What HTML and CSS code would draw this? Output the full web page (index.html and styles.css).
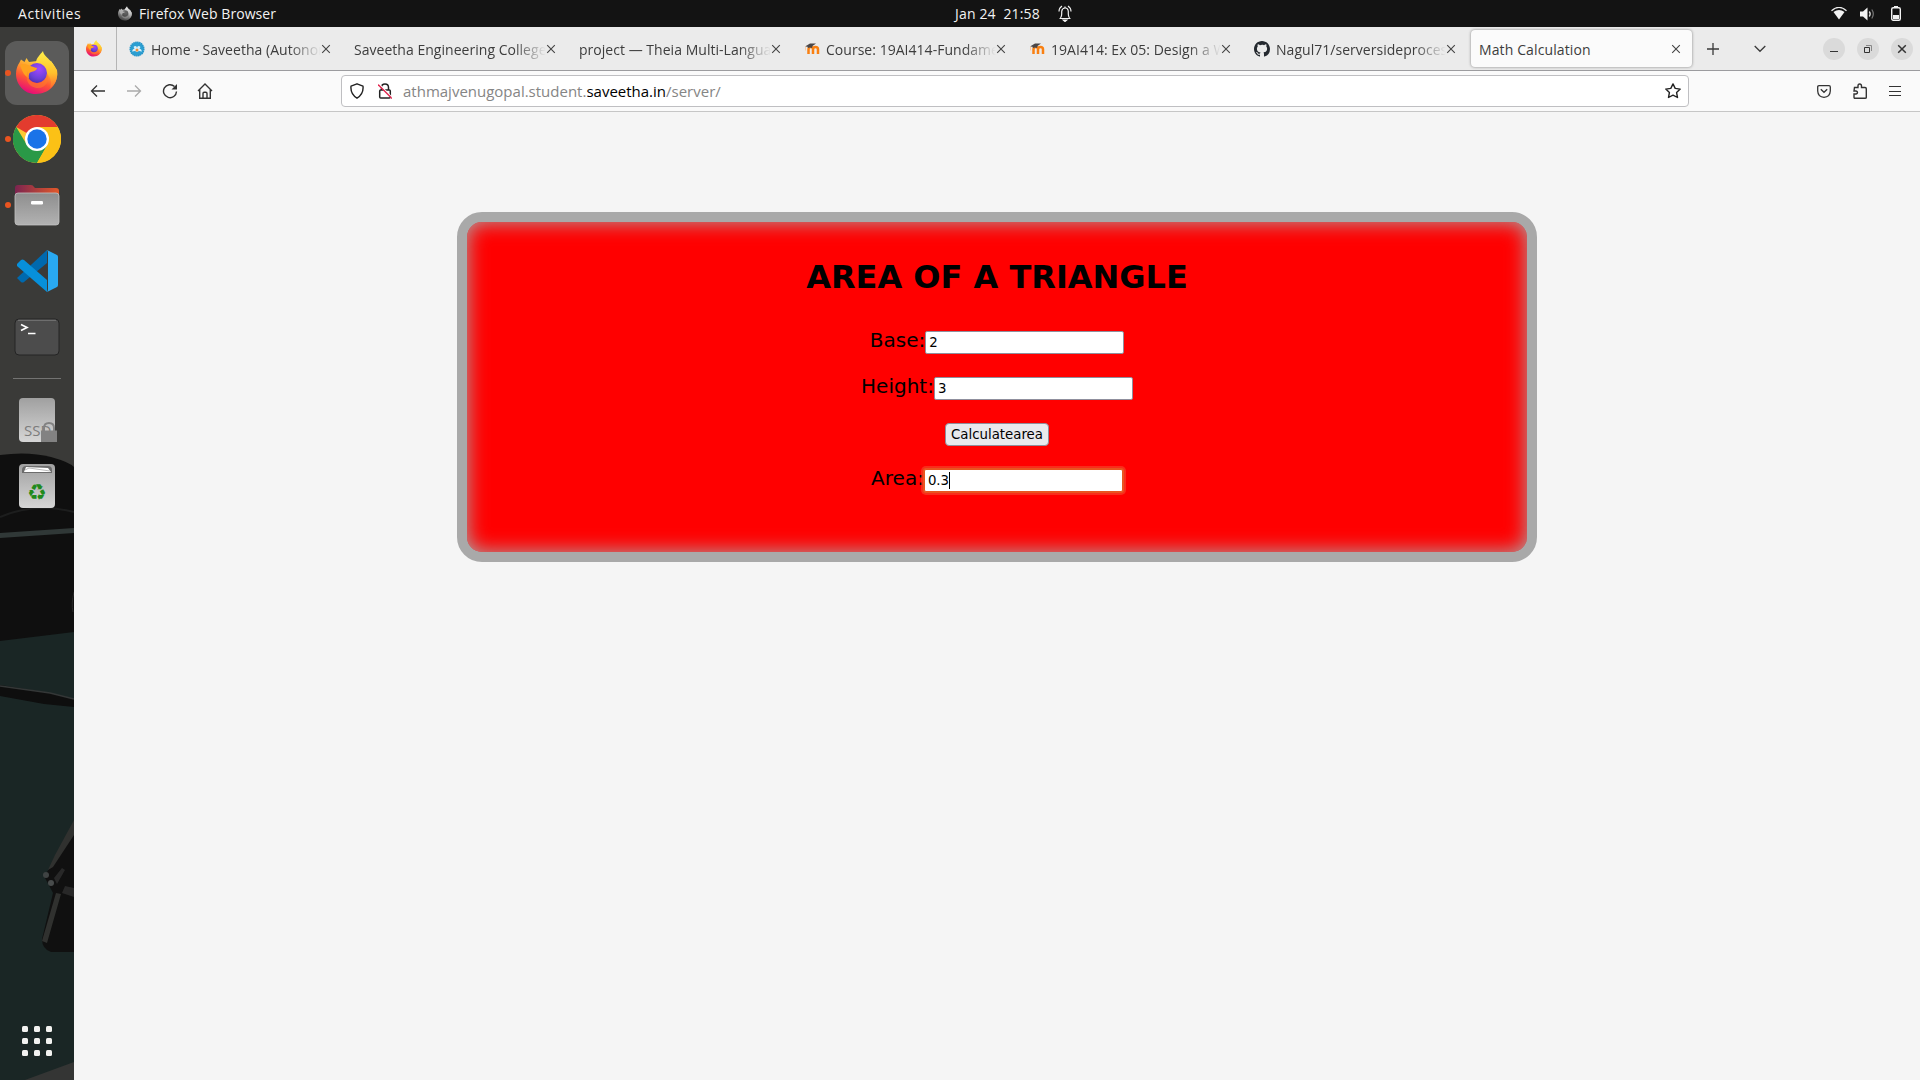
FILE: index.html
```html
<!DOCTYPE html>
<html lang="en">
<head>
<meta charset="utf-8">
<title>Math Calculation</title>
<link rel="stylesheet" href="styles.css">
</head>
<body>
<svg class="defs" width="0" height="0" aria-hidden="true">
  <defs>
    <linearGradient id="flame" x1=".8" y1="0" x2=".35" y2="1"><stop offset="0" stop-color="#fff44f"/><stop offset=".35" stop-color="#ffa930"/><stop offset=".65" stop-color="#ff5634"/><stop offset="1" stop-color="#e5097c"/></linearGradient>
    <linearGradient id="tail" x1=".5" y1="0" x2=".5" y2="1"><stop offset="0" stop-color="#fff04a"/><stop offset=".6" stop-color="#ffc02c"/><stop offset="1" stop-color="#ff6b2f"/></linearGradient>
    <radialGradient id="globe" cx=".6" cy=".3" r=".8"><stop offset="0" stop-color="#a347ff"/><stop offset=".6" stop-color="#6b41d8"/><stop offset="1" stop-color="#4a2aa8"/></radialGradient>
    <linearGradient id="folder" x1="0" y1="0" x2="1" y2="0"><stop offset="0" stop-color="#7b2450"/><stop offset="1" stop-color="#e2592a"/></linearGradient>
    <linearGradient id="metal" x1="0" y1="0" x2="0" y2="1"><stop offset="0" stop-color="#8e8e8e"/><stop offset="1" stop-color="#b2b2b2"/></linearGradient>
    <linearGradient id="drive" x1="0" y1="0" x2="0" y2="1"><stop offset="0" stop-color="#a0a0a0"/><stop offset="1" stop-color="#d6d6d6"/></linearGradient>
    <symbol id="firefox" viewBox="0 0 42 44">
      <path fill="url(#flame)" d="M3.5 11.500 5 8.500 8.500 11l2-4 2.500 4 8-1 8 5 6-5 6 9c2 13-7 24-21 24C9 43.500 0 34 0 23c0-5 1.500-8.500 3.500-11.500z"/>
      <path fill="url(#tail)" d="M27 0c1 7 11 9 14 21 1 6-2 13-7 16 2-6 1-10-4-16L20 12c0-5 4-8 7-12z"/>
      <circle cx="21" cy="22" r="10" fill="url(#globe)"/>
      <path fill="#ffa21f" d="M4 14c5-3 9 1 17 3 0 3-5 3.500-7 4.500-2 2-1 6-1 6C7 24 6 19 4 14z"/>
      <path fill="#ff7a2c" d="M12 20c-2 8 4 13 11 12 5-1 8-6 8-10 3 8-1 15-9 15-9 0-14-9-10-17z" opacity=".6"/>
    </symbol>
    <symbol id="close" viewBox="0 0 10 10"><path d="M1.200 1.200l7.600 7.600M8.800 1.200L1.200 8.800" fill="none" stroke="currentColor" stroke-width="1.100"/></symbol>
    <symbol id="moodle" viewBox="0 0 16 12">
      <path d="M4.500 11V6.500q0-2.500 2.300-2.500T9 6.500V11M9 6.500Q9 4 11.500 4T14 6.500V11" fill="none" stroke="#f98012" stroke-width="2.500"/>
      <path d="M1 3.500 6 .500h6L8.500 3l-.5 2q-2-1-4 0L3.500 3.700z" fill="#4a4748"/><path d="M1.500 3.500v4" stroke="#f7c7a0" stroke-width=".9"/>
    </symbol>
  </defs>
</svg>

<header class="topbar">
  <span class="activities">Activities</span>
  <span class="app"><svg class="grey" width="14" height="15"><use href="#firefox"/></svg><span class="app-name">Firefox Web Browser</span></span>
  <span class="clock"><span class="clock-text">Jan 24&nbsp; 21:58</span>
    <svg width="14" height="17" viewBox="0 0 14 17" fill="none" stroke="#f2f2f2" stroke-width="1.200"><path d="M1.500 13.500h11M2.500 13q1.200-1.500 1.200-4V6.500Q4 3.200 7 3t3.300 3.500V9q0 2.500 1.200 4M1 6.500Q1 3 4 1M13 6.500Q13 3 10 1"/><path d="M7 3V1.500"/><path d="M5.300 15h3.400L7 16.500z" fill="#f2f2f2"/></svg>
  </span>
  <span class="status">
    <svg width="16" height="13" viewBox="0 0 16 13"><path d="M.5 3.800Q8-3 15.500 3.800" fill="none" stroke="#eee" stroke-width="1.300"/><path d="M2.500 5Q8 1.200 13.500 5L8 12.500z" fill="#f2f2f2"/></svg>
    <svg width="15" height="14" viewBox="0 0 15 14"><path d="M0 4.500h3L7.500.500v13L3 9.500H0z" fill="#f2f2f2"/><path d="M9.300 4.500q1.800 2.500 0 5" fill="none" stroke="#ddd" stroke-width="1.300"/><path d="M11.800 2.500q3 4.500 0 9" fill="none" stroke="#777" stroke-width="1.200"/></svg>
    <svg width="10" height="15" viewBox="0 0 10 15"><rect x=".7" y="1.700" width="8.600" height="12.600" rx="1.500" fill="none" stroke="#f2f2f2" stroke-width="1.400"/><path d="M3 0h4v1.500H3zM2 9h6v4H2z" fill="#f2f2f2"/></svg>
  </span>
</header>

<div class="desktop">
  <nav class="dock">
    <svg class="wallpaper" width="74" height="1053" viewBox="0 27 74 1053">
      <path fill="#3a3a38" d="M0 27h74v1053H0z"/>
      <path fill="#0f0f0f" d="M0 455q28-4 51 2 18 5 23 10v175L0 645z"/>
      <path d="M0 517q35-15 74-5" fill="none" stroke="#1d1e1e" stroke-width="2"/>
      <path fill="#303837" d="M0 533l74-5v5L0 538z"/>
      <path fill="#1a2625" d="M0 641l74-9v448H0z"/>
      <path d="M74 592q-3 12-1 20" stroke="#292929" fill="none"/>
      <path fill="#0e0e0e" d="M0 685l50 8 24 6v8l-30-3-44-8z"/>
      <path d="M0 686l50 7 24 6" fill="none" stroke="#343737" stroke-width="1.500"/>
      <path fill="#101010" d="M74 821L54 862l-10 14 9 17-11 46q0 10 9 13h23z"/>
      <path fill="#30312f" d="M74 820L55 855l-7 15 5-3 21-32zM56 893l5 1-14 49-5-2z"/>
      <path fill="#282828" d="M54 878l8-10 3 2-8 14zM62 893l3-7 9 2v9z"/>
      <circle cx="46" cy="875" r="3" fill="#3f4343"/><circle cx="51" cy="883" r="3" fill="#484b4b"/>
      <path fill="#343534" d="M25 1080l49-18v18z"/>
    </svg>
    <div class="slot running active"><svg width="42" height="44"><use href="#firefox"/></svg></div>
    <div class="slot running">
      <svg width="48" height="48" viewBox="0 0 48 48"><circle cx="24" cy="24" r="24" fill="#fcc934"/><path fill="#e33b2e" d="M24 24 3.200 12A24 24 0 0 1 44.800 12z"/><path fill="#2a9947" d="M3.200 12A24 24 0 0 0 24 48l10.400-18L24 24l-10 6z"/><path fill="#fbc116" d="M24 48a24 24 0 0 0 20.800-36H24l10.400 18z"/><circle cx="24" cy="24" r="12" fill="#fff"/><circle cx="24" cy="24" r="9.700" fill="#1a73e8"/></svg>
    </div>
    <div class="slot running">
      <svg width="46" height="42" viewBox="0 0 46 42"><path fill="url(#folder)" d="M1 14V4q0-3 3-3h13q2 0 3 2l1 1h21q3 0 3 3v9z"/><rect x="1" y="9" width="44" height="32" rx="3" fill="url(#metal)" stroke="#c2c2c2" stroke-width=".8"/><rect x="17" y="17" width="12" height="3.500" rx="1.200" fill="#fff"/></svg>
    </div>
    <div class="slot">
      <svg width="42" height="42" viewBox="0 0 42 42"><path fill="#0069ae" d="M1 28l4 4q1.500 1 3 0L31 13V0z"/><path fill="#0790db" d="M1 14l4-4q1.500-1 3 0L31 30v12L1 16z"/><path fill="#29a9f1" d="M31 0l10 5q1 .6 1 2v28q0 1.400-1 2l-10 5q1-1 1-3V3q0-2-1-3z"/></svg>
    </div>
    <div class="slot">
      <svg width="46" height="38" viewBox="0 0 46 38"><rect x="1" y="1" width="44" height="36" rx="4" fill="#4c4c4c" stroke="#242424"/><path d="M4 2.300h38" stroke="#777"/><path d="M7 6.500l6 3-6 3M14 15.500h7.500" fill="none" stroke="#fff" stroke-width="1.700"/></svg>
    </div>
    <div class="divider"></div>
    <div class="slot">
      <svg width="40" height="44" viewBox="0 0 40 44" class="ssd"><rect width="36" height="44" rx="4" fill="url(#drive)"/><text x="5" y="38" class="ssd-label">SSD</text><path d="M25 33v-3q0-5 5-5t5 5v3" fill="none" stroke="#828282" stroke-width="2"/><rect x="22" y="32.500" width="16" height="11.500" fill="#828282"/></svg>
    </div>
    <div class="slot">
      <svg width="36" height="44" viewBox="0 0 36 44"><rect width="36" height="44" rx="4" fill="url(#drive)"/><path fill="#6c6c6c" d="M3 9V6q0-4 4-4h22q4 0 4 4v3z"/><path fill="#fff" d="M5 8l2-5 22 1 3 4z"/><path d="M6 6l4-2 21 3" fill="none" stroke="#bbb"/><text x="18" y="36" text-anchor="middle" class="recycle">♻</text></svg>
    </div>
    <div class="apps"><i></i><i></i><i></i><i></i><i></i><i></i><i></i><i></i><i></i></div>
  </nav>

  <section class="window">
    <div class="tabs">
      <div class="pinned"><svg width="16" height="17"><use href="#firefox"/></svg></div>
      <div class="tab"><svg class="fav" width="16" height="16" viewBox="0 0 16 16"><circle cx="8" cy="8" r="6.800" fill="#2b9fd2" stroke="#2394c9" stroke-width="1.500" stroke-dasharray="1.500 .5"/><path d="M3 10.500q.5-2.500 2.500-3L4.500 6q1.500-1.500 3-.5L8 7l.5-1.500q1.500-1 3 .5l-1 1.500q2 .5 2.500 3l-3-.5-2 1-2-1z" fill="#d9f0fa"/><circle cx="8" cy="9" r="1.500" fill="#ef8e3b"/></svg><span class="label">Home - Saveetha (Autonomous)</span><svg class="x" width="10" height="10"><use href="#close"/></svg></div>
      <div class="tab"><span class="label">Saveetha Engineering College</span><svg class="x" width="10" height="10"><use href="#close"/></svg></div>
      <div class="tab"><span class="label">project — Theia Multi-Language</span><svg class="x" width="10" height="10"><use href="#close"/></svg></div>
      <div class="tab"><svg class="fav" width="16" height="12"><use href="#moodle"/></svg><span class="label">Course: 19AI414-Fundamentals</span><svg class="x" width="10" height="10"><use href="#close"/></svg></div>
      <div class="tab"><svg class="fav" width="16" height="12"><use href="#moodle"/></svg><span class="label">19AI414: Ex 05: Design a Website</span><svg class="x" width="10" height="10"><use href="#close"/></svg></div>
      <div class="tab"><svg class="fav" width="16" height="16" viewBox="0 0 16 16"><path fill="#24292f" fill-rule="evenodd" d="M8 0C3.580 0 0 3.580 0 8c0 3.540 2.290 6.530 5.470 7.590.4.070.55-.17.55-.38 0-.19-.01-.82-.01-1.490-2.010.37-2.530-.49-2.690-.94-.09-.23-.48-.94-.82-1.130-.28-.15-.68-.52-.01-.53.63-.01 1.080.58 1.230.82.72 1.210 1.870.87 2.330.66.070-.52.28-.87.51-1.070-1.780-.2-3.640-.89-3.640-3.950 0-.87.31-1.590.82-2.150-.08-.2-.36-1.020.08-2.120 0 0 .67-.21 2.200.82A7.600 7.600 0 0 1 8 3.860c.68 0 1.360.09 2 .27 1.530-1.040 2.200-.82 2.200-.82.44 1.100.16 1.920.08 2.120.51.56.82 1.270.82 2.150 0 3.070-1.870 3.750-3.650 3.950.29.25.54.73.54 1.480 0 1.070-.01 1.930-.01 2.200 0 .21.15.46.55.38A8.010 8.010 0 0 0 16 8c0-4.420-3.580-8-8-8z"/></svg><span class="label">Nagul71/serversideprocessing</span><svg class="x" width="10" height="10"><use href="#close"/></svg></div>
      <div class="tab current"><span class="label">Math Calculation</span><svg class="x" width="10" height="10"><use href="#close"/></svg></div>
      <svg class="newtab" width="12" height="12" viewBox="0 0 12 12"><path d="M6 0v12M0 6h12" stroke="#3a3a3a" stroke-width="1.300"/></svg>
      <svg class="chevron" width="12" height="8" viewBox="0 0 12 8"><path d="M.7 1l5.300 5.300L11.300 1" fill="none" stroke="#3a3a3a" stroke-width="1.300"/></svg>
      <div class="controls">
        <span class="ctl"><svg width="10" height="10"><path d="M1 7.500h8" stroke="#333"/></svg></span>
        <span class="ctl"><svg width="10" height="10" fill="none"><path d="M3 1.500h5.500V7" stroke="#888"/><path d="M1.500 3.500h5v5h-5z" stroke="#333"/></svg></span>
        <span class="ctl"><svg width="10" height="10"><path d="M1.200 1.200l7.600 7.600M8.800 1.200L1.200 8.800" stroke="#333" stroke-width="1.500"/></svg></span>
      </div>
    </div>

    <div class="toolbar">
      <div class="navbuttons">
        <svg width="16" height="16" viewBox="0 0 16 16"><path d="M15 8H1.500M7 2.500L1.500 8 7 13.500" fill="none" stroke="#333" stroke-width="1.300"/></svg>
        <svg width="16" height="16" viewBox="0 0 16 16"><path d="M1 8h13.500M9 2.500L14.500 8 9 13.500" fill="none" stroke="#aaa" stroke-width="1.300"/></svg>
        <svg width="16" height="16" viewBox="0 0 16 16"><path d="M12.500 3.500A6.500 6.500 0 1 0 14.500 8.500" fill="none" stroke="#333" stroke-width="1.400"/><path d="M15 1v5.500H9.500z" fill="#333"/></svg>
        <svg class="home" width="16" height="16" viewBox="0 0 16 16"><path d="M1 8l7-7 7 7M2.700 6.500v8.800h10.600V6.500M6 15V10.500q0-1.200 1.200-1.200h1.600q1.200 0 1.200 1.200V15" fill="none" stroke="#333" stroke-width="1.400"/></svg>
      </div>
      <div class="urlbar">
        <svg width="14" height="16" viewBox="0 0 14 16"><path d="M7 .8l6 2.400q.8 7.800-6 12Q.2 11 1 3.200z" fill="none" stroke="#222" stroke-width="1.400" stroke-linejoin="round"/></svg>
        <svg class="lock" width="14" height="16" viewBox="0 0 14 16"><rect x="1.700" y="7" width="10.600" height="8" rx="1" fill="none" stroke="#222" stroke-width="1.500"/><path d="M3.500 7V4.500Q3.500 1 7 1t3.500 3.500V7" fill="none" stroke="#222" stroke-width="1.500"/><path d="M1 1l13 13.500" stroke="#fff" stroke-width="1.500"/><path d="M0 1.500l14 14" stroke="#e22850" stroke-width="1.400"/></svg>
        <span class="url">athmajvenugopal.student.<b>saveetha.in</b>/server/</span>
        <svg width="16" height="16" viewBox="0 0 16 16"><path d="M8 .9l2.200 4.500 5 .7-3.600 3.500.9 4.900L8 12.200l-4.500 2.300.9-4.900L.8 6.100l5-.7z" fill="none" stroke="#222" stroke-width="1.400" stroke-linejoin="round"/></svg>
      </div>
      <div class="tools">
        <svg width="14" height="13" viewBox="0 0 14 13" fill="none" stroke="#333" stroke-width="1.300"><path d="M2 .7h10q1.300 0 1.300 1.300v4Q13 12 7 12.300 1 12 .7 6V2Q.7.700 2 .700z"/><path d="M3.800 4.300L7 7.300l3.200-3"/></svg>
        <svg width="14" height="16" viewBox="0 0 14 16"><path d="M1.500 4.500H5V3q0-2 1.700-2t1.800 2v1.500H12q1.300 0 1.300 1.300v8.700q0 .8-1.300.8H2q-1 0-1-1.300V11h2q1.500-.3 1.500-1.500T3 8H1z" fill="none" stroke="#333" stroke-width="1.400"/></svg>
        <svg width="12" height="12"><path d="M0 1.500h12M0 6.500h12M0 10.500h12" stroke="#333"/></svg>
      </div>
    </div>

    <main class="page">
      <div class="card">
        <h1>AREA OF A TRIANGLE</h1>
        <form class="fields">
          <div class="field"><span>Base:</span><span class="input">2</span></div>
          <div class="field"><span>Height:</span><span class="input">3</span></div>
          <div class="field"><button type="button">Calculatearea</button></div>
          <div class="field"><span>Area:</span><span class="input focus">0.3<i class="caret"></i></span></div>
        </form>
      </div>
    </main>
  </section>
</div>
</body>
</html>
```
FILE: styles.css
```css
* { box-sizing: border-box; }
body { margin: 0; width: 1920px; height: 1080px; overflow: hidden; font: 14px "Open Sans", "Noto Sans", sans-serif; display: flex; flex-direction: column; }
svg { display: block; flex: none; }
.defs { position: absolute; }

/* system bar */
.topbar { height: 27px; background: #131313; color: #f2f2f2; display: flex; align-items: center; flex: none; white-space: nowrap; }
.activities { margin-left: 18px; width: 100px; letter-spacing: .55px; }
.app { display: flex; align-items: center; gap: 7px; width: 837px; }
.app-name { letter-spacing: .07px; }
.grey { filter: grayscale(1); }
.clock { display: flex; align-items: center; width: 876px; gap: 18px; }
.clock-text { width: 85px; letter-spacing: .17px; padding-bottom: 1px; }
.status { display: flex; align-items: center; gap: 13px; }
.status svg:last-child { margin-left: 3px; }

/* dock */
.desktop { display: flex; flex: 1; min-height: 0; }
.dock { width: 74px; flex: none; position: relative; padding-top: 13px; display: flex; flex-direction: column; overflow: hidden; }
.wallpaper { position: absolute; left: 0; top: 0; z-index: -1; }
.slot { height: 66px; flex: none; display: flex; align-items: center; justify-content: center; position: relative; }
.active::after { content: ""; position: absolute; inset: 1px 5px; border-radius: 12px; background: #5b5b5a; z-index: -1; }
.running::before { content: ""; position: absolute; left: 5px; top: 30px; width: 6px; height: 6px; border-radius: 50%; background: #e95420; }
.divider { height: 1px; margin: 8px 13px; background: #737372; flex: none; }
.ssd { margin-left: 4px; }
.ssd-label { font: 15px "Open Sans", sans-serif; fill: #7c7c7c; }
.recycle { font: 22px "DejaVu Sans", sans-serif; fill: #218a1c; }
.apps { margin: auto auto 24px; display: grid; grid-template-columns: repeat(3, 6px); gap: 6px; }
.apps i { height: 6px; border-radius: 1.500px; background: #f2f2f0; }

/* tab strip */
.window { flex: 1; display: flex; flex-direction: column; min-width: 0; }
.tabs { height: 44px; flex: none; background: #ebebeb; border-bottom: 1px solid #9c9c9f; display: flex; align-items: center; color: #3d3d3d; }
.pinned { width: 43px; height: 43px; padding: 13px 0 0 12px; border-right: 1px solid #b5b5b5; flex: none; }
.tab { width: 225px; height: 37px; flex: none; padding: 0 12px 0 11px; display: flex; align-items: center; }
.pinned + .tab { margin-left: 1px; }
.fav { margin-right: 6px; }
.label { flex: 1; padding-top: 2px; letter-spacing: .03px; overflow: hidden; white-space: nowrap; -webkit-mask-image: linear-gradient(90deg, #000 calc(100% - 32px), transparent); mask-image: linear-gradient(90deg, #000 calc(100% - 32px), transparent); }
.x { color: #444; }
.current { width: 221px; margin: 0 2px 0 3px; padding: 0 11px 0 8px; background: #fbfbfb; border-radius: 4px; box-shadow: 0 0 3px rgba(0,0,0,.45); }
.current .label { letter-spacing: .12px; -webkit-mask-image: none; mask-image: none; }
.newtab { margin-left: 13px; }
.chevron { margin-left: 35px; }
.controls { display: flex; gap: 12px; margin-left: 57px; }
.ctl { width: 22px; height: 22px; border-radius: 50%; background: #dadada; display: flex; align-items: center; justify-content: center; }

/* toolbar */
.toolbar { height: 41px; flex: none; background: #fafafa; border-bottom: 1px solid #c6c6c6; display: flex; align-items: center; }
.navbuttons { display: flex; gap: 20px; width: 267px; padding-left: 16px; }
.home { margin-left: -1px; }
.urlbar { width: 1348px; height: 32px; border: 1px solid #bfbfc2; border-radius: 4px; background: #fff; display: flex; align-items: center; padding: 0 7px 0 8px; }
.lock { margin-left: 14px; }
.url { margin-left: 11px; flex: 1; color: #858585; font-size: 15px; }
.url b { font-weight: 400; color: #000; }
.tools { display: flex; align-items: center; margin-left: 128px; gap: 22px; }

/* document */
.page { flex: 1; background: #f5f5f5; padding-top: 100px; }
.card { width: 1080px; height: 350px; margin: 0 auto; background: red; border: 10px solid #a9a9a9; border-radius: 25px; box-shadow: inset 0 0 20px #a9a9a9; font: 20px "DejaVu Sans", sans-serif; color: #000; text-align: center; padding-top: 37px; }
h1 { margin: 0 0 35px; font-size: 32px; line-height: 37px; }
.fields { display: flex; flex-direction: column; gap: 23px; }
.field { height: 23px; display: flex; justify-content: center; line-height: 18px; }
.input { width: 199px; height: 23px; border: 1px solid #8f8f9d; border-radius: 2px; background: #fff; font-size: 13.333px; line-height: 21px; text-align: left; padding-left: 3px; display: flex; align-items: center; }
.focus { border-color: #e95420; box-shadow: 0 0 0 1px #e95420, 0 0 0 3px rgba(240,100,60,.45); }
.caret { width: 1px; height: 17px; background: #000; }
button { width: 104px; height: 23px; padding: 0; border: 1px solid #8f8f9d; border-radius: 4px; background: #e9e9ed; color: #000; font: 13.333px "DejaVu Sans", sans-serif; }
```
